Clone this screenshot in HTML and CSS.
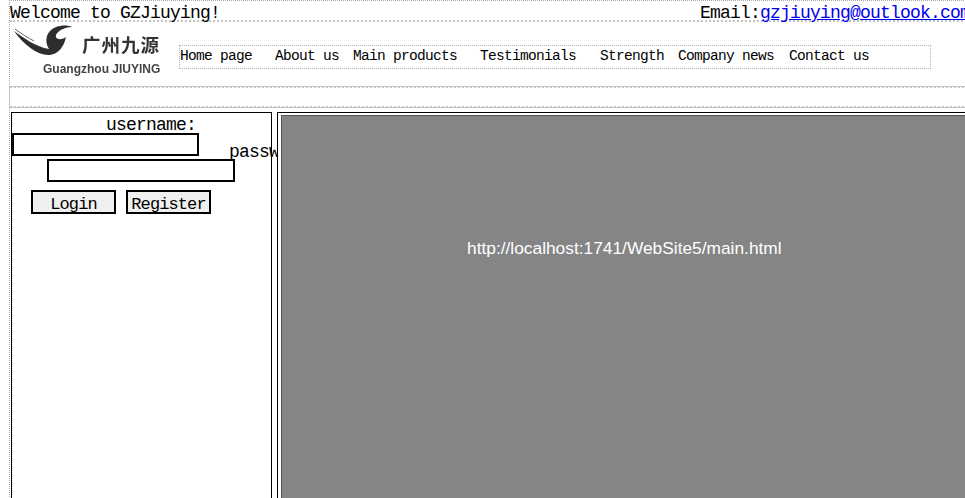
FILE: index.html
```html
<!DOCTYPE html>
<html lang="en">
<head>
<meta charset="utf-8">
<title>GZJiuying</title>
<link rel="stylesheet" href="styles.css">
</head>
<body>
<div class="page">
  <div class="top-bar">
    <span class="welcome">Welcome to GZJiuying!</span>
    <span class="email">Email:<a href="#">gzjiuying@outlook.com</a></span>
  </div>
  <div class="header">
    <div class="logo">
      <svg class="logo-mark" width="62" height="36" viewBox="0 0 62 36">
        <path d="M0 6 C10 13 22 22 35 24 C30 16 32 6 42 2 C48 0 54 0 58 2 C52 2 44 5 42 10 C41 14 46 16 52 12 C50 22 44 29 36 30 C24 31 10 20 0 6 Z" fill="#2e2e2e"/>
        <path d="M1 4 C8 9 14 13 20 16" fill="none" stroke="#666" stroke-width="1"/>
      </svg>
      <span class="logo-cn">广州九源</span>
      <span class="logo-en">Guangzhou JIUYING</span>
    </div>
    <nav class="nav">
      <a class="nav-home">Home page</a>
      <a class="nav-about">About us</a>
      <a class="nav-main">Main products</a>
      <a class="nav-test">Testimonials</a>
      <a class="nav-str">Strength</a>
      <a class="nav-news">Company news</a>
      <a class="nav-contact">Contact us</a>
    </nav>
  </div>
  <div class="band"></div>
  <div class="content">
    <aside class="login">
      <div class="row-user">username:</div>
      <div class="row-input"><input class="field field-user" type="text"><span class="pass-label">password:</span></div>
      <div class="row-pass"><input class="field" type="password"></div>
      <div class="row-btns"><button class="btn">Login</button><button class="btn">Register</button></div>
    </aside>
    <main class="frame">
      <div class="placeholder">http://localhost:1741/WebSite5/main.html</div>
    </main>
  </div>
</div>
</body>
</html>
```
FILE: styles.css
```css
html, body { margin: 0; padding: 0; background: #fff; }
body { width: 965px; height: 498px; overflow: hidden; font-family: "Liberation Mono", monospace; color: #000; }
.page { width: 1000px; height: 498px; margin-left: 9px; border-left: 1px dotted #aaa; border-top: 1px dotted #aaa; }
.top-bar { height: 19px; border-bottom: 2px dotted #c4c4c4; display: flex; font-size: 18px; letter-spacing: -0.8px; line-height: 24px; }
.welcome { width: 690px; }
.email a { color: #00e; text-decoration: underline; }
.header { height: 64px; display: flex; }
.logo { width: 169px; height: 64px; position: relative; filter: blur(0.4px); }
.logo-mark { position: absolute; left: 4px; top: 3px; }
.logo-cn { position: absolute; left: 72px; top: 11px; font: 700 18.5px/22px "Noto Sans CJK SC", sans-serif; color: #333; white-space: nowrap; letter-spacing: 1px; }
.logo-en { position: absolute; left: 33px; top: 40px; font: 700 12px/14px "Liberation Sans", sans-serif; color: #444; white-space: nowrap; }
.nav { width: 750px; height: 22px; margin-top: 23px; border: 1px dotted #b4b4b4; font-size: 14.5px; letter-spacing: -0.7px; line-height: 20px; display: flex; white-space: pre; }
.nav a { display: block; }
.nav-home { width: 95px; }
.nav-about { width: 78px; }
.nav-main { width: 127px; }
.nav-test { width: 120px; }
.nav-str { width: 78px; }
.nav-news { width: 111px; }
.band {
  height: 22px;
  margin-left: -1px;
  border-left: 1px solid #c4c4c4;
  background-color: #fff;
  background-image:
    linear-gradient(#c4c4c4, #c4c4c4),
    repeating-linear-gradient(90deg, #c4c4c4 0 2px, #fff 2px 4px),
    repeating-linear-gradient(90deg, #c4c4c4 0 2px, #fff 2px 4px),
    linear-gradient(#c4c4c4, #c4c4c4);
  background-size: 100% 1px, 100% 1px, 100% 1px, 100% 1px;
  background-position: 0 0, 0 1px, 0 20px, 0 21px;
  background-repeat: no-repeat;
}
.content { display: flex; margin-top: 4px; }
.login { box-sizing: border-box; flex: 0 0 auto; width: 261px; height: 400px; margin-left: 1px; border: 1px solid #000; font-size: 18px; letter-spacing: -0.8px; line-height: 24px; }
.row-user { padding-left: 94px; height: 20px; }
.row-input { display: flex; height: 26px; white-space: nowrap; }
.field { box-sizing: border-box; flex: 0 0 auto; display: block; width: 188px; height: 23px; border: 2px solid #000; padding: 0; margin: 0; background: #fff; }
.field-user { width: 187px; }
.pass-label { margin-left: 30px; margin-top: 7px; }
.row-pass { padding-left: 35px; height: 31px; }
.row-btns { display: flex; gap: 10px; padding-left: 19px; }
.btn { box-sizing: border-box; width: 85px; height: 24px; border: 2px solid #000; background: #f0f0f0; padding: 3px 0 0; font: 17px/20px "Liberation Mono", monospace; letter-spacing: -0.9px; color: #000; }
.frame { box-sizing: border-box; flex: 0 0 auto; width: 720px; height: 400px; margin-left: 5px; border: 1px solid #000; padding: 2px 0 0 3px; background: #fff; position: relative; z-index: 1; }
.placeholder { height: 400px; box-sizing: border-box; background: #858585; border-left: 1px solid #555; border-top: 1px solid #555; color: #fff; font: 17.33px/20px "Liberation Sans", sans-serif; padding: 122px 0 0 185px; white-space: nowrap; }
```
